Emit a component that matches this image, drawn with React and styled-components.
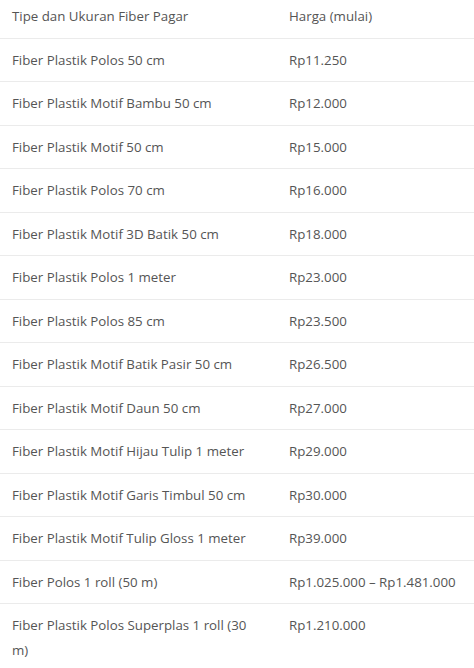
import styled, { createGlobalStyle } from 'styled-components';

const GlobalStyle = createGlobalStyle`
    html, body {
        margin: 0;
        padding: 0;
        background: #fff;
    }
`

const rows = [
    ['Fiber Plastik Polos 50 cm', 'Rp11.250'],
    ['Fiber Plastik Motif Bambu 50 cm', 'Rp12.000'],
    ['Fiber Plastik Motif 50 cm', 'Rp15.000'],
    ['Fiber Plastik Polos 70 cm', 'Rp16.000'],
    ['Fiber Plastik Motif 3D Batik 50 cm', 'Rp18.000'],
    ['Fiber Plastik Polos 1 meter', 'Rp23.000'],
    ['Fiber Plastik Polos 85 cm', 'Rp23.500'],
    ['Fiber Plastik Motif Batik Pasir 50 cm', 'Rp26.500'],
    ['Fiber Plastik Motif Daun 50 cm', 'Rp27.000'],
    ['Fiber Plastik Motif Hijau Tulip 1 meter', 'Rp29.000'],
    ['Fiber Plastik Motif Garis Timbul 50 cm', 'Rp30.000'],
    ['Fiber Plastik Motif Tulip Gloss 1 meter', 'Rp39.000'],
    ['Fiber Polos 1 roll (50 m)', 'Rp1.025.000 – Rp1.481.000'],
    ['Fiber Plastik Polos Superplas 1 roll (30 m)', 'Rp1.210.000'],
]

export default function App() {
    return (
        <>
            <GlobalStyle />
            <PriceTable>
                <colgroup>
                    <col style={{ width: 277 }} />
                    <col />
                </colgroup>
                <thead>
                    <tr>
                        <Cell $head>Tipe dan Ukuran Fiber Pagar</Cell>
                        <Cell $head>Harga (mulai)</Cell>
                    </tr>
                </thead>
                <tbody>
                    {rows.map(([name, price]) => (
                        <tr key={name}>
                            <Cell>{name}</Cell>
                            <Cell>{price}</Cell>
                        </tr>
                    ))}
                </tbody>
            </PriceTable>
        </>
    )
}

const PriceTable = styled.table`
    width: 474px;
    table-layout: fixed;
    border-collapse: collapse;
    font-family: "Open Sans", "Liberation Sans", sans-serif;
    font-size: 13.3px;
    color: #555;
`

const Cell = styled.td`
    text-align: left;
    vertical-align: top;
    font-weight: 400;
    line-height: 24.5px;
    padding: ${p => p.$head ? '4px 12px 9px' : '9px 12px'};
    border-bottom: 1px solid #ebebeb;
`
